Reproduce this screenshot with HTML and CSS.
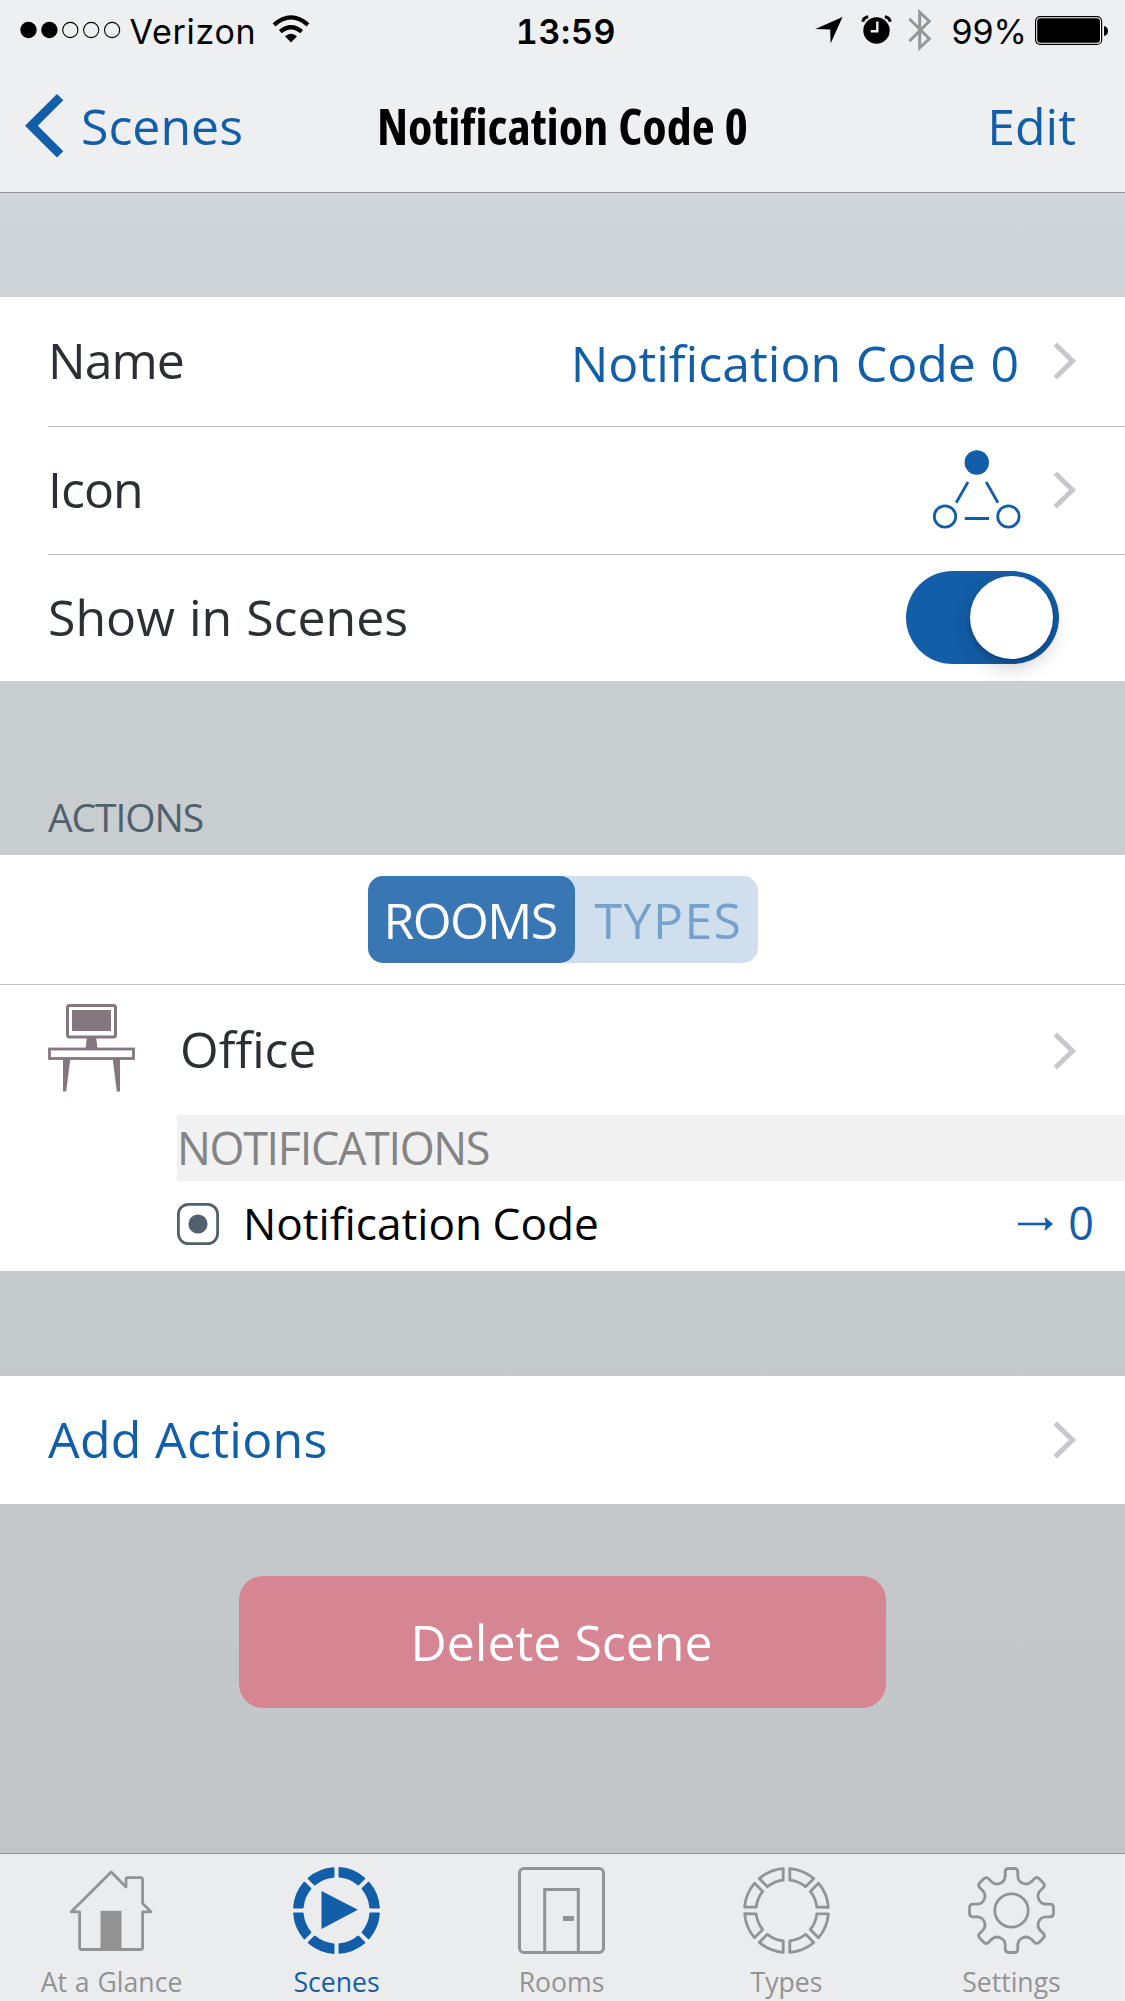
FILE: index.html
```html
<!DOCTYPE html>
<html lang="en">
<head>
<meta charset="utf-8">
<title>Notification Code 0</title>
<link rel="stylesheet" href="styles.css">
</head>
<body>
<svg class="defs" width="0" height="0">
  <defs>
    <path id="seg" d="M3.3-41.9A42 42 0 0 1 27.3-31.9L19.1-23.8A30.5 30.5 0 0 0 3.3-30.3Z"/>
    <path id="seg-solid" d="M3-42.4A42.5 42.5 0 0 1 27.8-32.1L21.8-26.1A34 34 0 0 0 3-33.9Z"/>
    <path id="tooth" d="M-6.3-34.5V-38.5Q-6.3-42-2.8-42H2.8Q6.3-42 6.3-38.5V-34.5A8 8 0 0 0 19.9-28.9"/>
    <symbol id="chevron" viewBox="0 0 24 38"><path d="M2.3 2.3L19.5 19L2.3 35.7" fill="none" stroke="#c7c7cc" stroke-width="5"/></symbol>
  </defs>
</svg>
<div class="screen">
  <header class="top">
    <div class="status">
      <div class="status-left">
        <svg width="101" height="18" viewBox="0 0 101 18"><circle cx="8.5" cy="9" r="8.2"/><circle cx="29.4" cy="9" r="8.2"/><g fill="none" stroke="#000" stroke-width="1.1"><circle cx="50.3" cy="9" r="7.6"/><circle cx="71.2" cy="9" r="7.6"/><circle cx="92.1" cy="9" r="7.6"/></g></svg>
        <span class="carrier">Verizon</span>
        <svg class="wifi" width="38" height="28" viewBox="0 0 38 28"><path d="M19 27.5L13 21.3Q19 16.3 25 21.3Z"/><path d="M8.3 16.7Q19 7.8 29.7 16.7M2 9.8Q19-5 36 9.8" fill="none" stroke="#000" stroke-width="4.2"/></svg>
      </div>
      <div class="clock">13:59</div>
      <div class="status-right">
        <svg class="loc" width="28" height="27" viewBox="0 0 28 27"><path d="M27.5 0L15.6 26.5L15.2 12.6L.4 12Z"/></svg>
        <svg class="alarm" width="29" height="28" viewBox="0 0 29 28"><circle cx="14.5" cy="14.5" r="13.2"/><path d="M.8 5.8Q1.5 1.5 6.2.8M28.2 5.8Q27.5 1.5 22.8.8" fill="none" stroke="#000" stroke-width="3"/><path d="M15.3 5.5V15.3H8.7" fill="none" stroke="#eeeff1" stroke-width="2.4"/></svg>
        <svg class="bt" width="24" height="42" viewBox="0 0 24 42"><path d="M1.3 9.8L21.3 29.8L11.7 38.8V3.2L21.3 12.2L1.3 32.2" fill="none" stroke="#959698" stroke-width="3"/></svg>
        <span class="percent">99%</span>
        <svg class="battery" width="74" height="29" viewBox="0 0 74 29"><rect x=".6" y=".6" width="66" height="27.8" rx="4.5" fill="#fff" stroke="#000" stroke-width="1.2"/><rect x="2.2" y="2.2" width="62.8" height="24.6" rx="3"/><path d="M69 10Q73 11 73 15T69 20Z"/></svg>
      </div>
    </div>
    <nav class="nav">
      <a class="back"><svg width="39" height="64" viewBox="0 0 39 64"><path d="M0 31.7L32 0L38.3 6.2L12.8 31.7L38.3 57.2L32 63.4Z" fill="#135ea8"/></svg><span>Scenes</span></a>
      <h1>Notification Code 0</h1>
      <a class="edit">Edit</a>
    </nav>
  </header>

  <main>
    <section class="card details">
      <div class="row name-row"><span>Name</span><span class="value">Notification Code 0</span><svg class="chev"><use href="#chevron"/></svg></div>
      <div class="row icon-row"><span>Icon</span>
        <svg class="scene-icon" width="88" height="80" viewBox="0 0 88 80"><circle cx="43.8" cy="12.5" r="12.2" fill="#135ea8"/><g fill="none" stroke="#135ea8" stroke-width="2.8"><circle cx="12" cy="66.5" r="10.7"/><circle cx="75.4" cy="66.5" r="10.7"/><path d="M31.8 68.5H56M35 32L23.2 52.8M53.2 32L65 52.8"/></g></svg>
        <svg class="chev"><use href="#chevron"/></svg></div>
      <div class="row show-row"><span class="show">Show in Scenes</span><span class="toggle"><i></i></span></div>
    </section>

    <h2>ACTIONS</h2>

    <section class="card">
      <div class="seg-row"><div class="segmented"><span class="on">ROOMS</span><span class="off">TYPES</span></div></div>
      <div class="office">
        <svg width="87" height="88" viewBox="0 0 87 88" fill="#85777f"><path d="M39 32H48L49.5 45H37.5ZM15 55H22.3L18.2 87.5H15ZM64.7 55H72V87.5H68.8Z"/><rect x="19.5" y="1.5" width="48" height="31.5" rx="2" fill="#fff" stroke="#85777f" stroke-width="3"/><rect x="24" y="6" width="39" height="21"/><rect x="1.5" y="45" width="84" height="9.5" fill="#fff" stroke="#85777f" stroke-width="2.8"/></svg>
        <span class="room">Office</span>
        <svg class="chev"><use href="#chevron"/></svg>
      </div>
      <div class="group">NOTIFICATIONS</div>
      <div class="action">
        <svg width="42" height="42" viewBox="0 0 42 42"><rect x="1.4" y="1.4" width="39.2" height="39.2" rx="10" fill="none" stroke="#50606d" stroke-width="2.8"/><circle cx="21" cy="21" r="9.6" fill="#50606d"/></svg>
        <span class="action-name">Notification Code</span>
        <svg class="arrow" width="35" height="16" viewBox="0 0 35 16"><path d="M0 8H30" stroke="#135ea8" stroke-width="2.6"/><path d="M26.5.8L35 8L26.5 15.2L27.8 8Z" fill="#135ea8"/></svg>
        <span class="action-value">0</span>
      </div>
    </section>

    <section class="card add">
      <div class="row"><span class="add-label">Add Actions</span><svg class="chev"><use href="#chevron"/></svg></div>
    </section>

    <button class="delete">Delete Scene</button>
  </main>

  <footer class="tabs">
    <a class="tab"><svg viewBox="0 0 87 87"><path d="M43.2 5L58 20V12.5Q58 10.6 60 10.6H72.5Q74.6 10.6 74.6 12.7V36.5L83 44.8H74.6V80.5Q74.6 82.5 72.6 82.5H13.6Q11.6 82.5 11.6 80.5V44.8H3.2Z" fill="none" stroke="#939393" stroke-width="2.8" stroke-linejoin="round"/><path d="M32.5 43.8H53.5V82H32.5Z" fill="#939393"/></svg><span class="glance">At a Glance</span></a>
    <a class="tab active"><svg viewBox="-43.5 -43.5 87 87"><g fill="#135ea8" stroke="#135ea8" stroke-width="2" stroke-linejoin="round"><use href="#seg-solid"/><use href="#seg-solid" transform="rotate(45)"/><use href="#seg-solid" transform="rotate(90)"/><use href="#seg-solid" transform="rotate(135)"/><use href="#seg-solid" transform="rotate(180)"/><use href="#seg-solid" transform="rotate(225)"/><use href="#seg-solid" transform="rotate(270)"/><use href="#seg-solid" transform="rotate(315)"/></g><path d="M-15-19.6L21.3-.8L-15 18.4Z" fill="#135ea8"/></svg><span>Scenes</span></a>
    <a class="tab"><svg viewBox="0 0 87 87" fill="none" stroke="#939393" stroke-width="3"><rect x="1.5" y="1.5" width="84" height="84" rx="4.5"/><path d="M26.7 85V22.6H60.3V85"/><path d="M45 51.5H56" stroke-width="5"/></svg><span>Rooms</span></a>
    <a class="tab"><svg viewBox="-43.5 -43.5 87 87" fill="none" stroke="#939393" stroke-width="2.8" stroke-linejoin="round"><use href="#seg"/><use href="#seg" transform="rotate(45)"/><use href="#seg" transform="rotate(90)"/><use href="#seg" transform="rotate(135)"/><use href="#seg" transform="rotate(180)"/><use href="#seg" transform="rotate(225)"/><use href="#seg" transform="rotate(270)"/><use href="#seg" transform="rotate(315)"/></svg><span>Types</span></a>
    <a class="tab"><svg viewBox="-43.5 -43.5 87 87" fill="none" stroke="#939393" stroke-width="2.8" stroke-linecap="round"><use href="#tooth"/><use href="#tooth" transform="rotate(45)"/><use href="#tooth" transform="rotate(90)"/><use href="#tooth" transform="rotate(135)"/><use href="#tooth" transform="rotate(180)"/><use href="#tooth" transform="rotate(225)"/><use href="#tooth" transform="rotate(270)"/><use href="#tooth" transform="rotate(315)"/><circle r="16.7"/></svg><span>Settings</span></a>
  </footer>
</div>
</body>
</html>
```
FILE: styles.css
```css
* { box-sizing: border-box; }
body { margin: 0; font: 400 50px/68px "Open Sans", "Noto Sans", sans-serif; color: #2c3034; }
svg { display: block; flex: none; overflow: visible; }
.defs { display: none; }
.screen { width: 1125px; height: 2001px; overflow: hidden; display: flex; flex-direction: column; background: linear-gradient(#d0d5d9 190px, #c9ced1 700px, #c5cacc 1300px, #c2c6c8 1850px); }
main { flex: 1; display: flex; flex-direction: column; }

.top { height: 193px; background: #eeeff1; border-bottom: 1px solid #8e9397; color: #000; }
.status { height: 60px; display: grid; grid-template-columns: 1fr 120px 1fr; align-items: center; font: 400 34px/40px Inter, sans-serif; }
.status-left, .status-right { display: flex; align-items: center; }
.status-left { padding-left: 19.5px; }
.carrier { margin-left: 9px; letter-spacing: .7px; padding-top: 3px; }
.wifi { margin-left: 16px; margin-bottom: 2px; }
.clock { font-weight: 600; text-align: center; letter-spacing: .7px; font-variant-numeric: tabular-nums; padding: 3px 0 0 7px; }
.status-right { justify-content: flex-end; padding-right: 16px; }
.loc { margin-right: 19px; }
.alarm { margin-right: 17px; }
.bt { margin-right: 19px; }
.percent { margin-right: 8px; padding-top: 3px; }
.nav { height: 132px; display: grid; grid-template-columns: 1fr 400px 1fr; align-items: center; padding: 0 49px 0 25px; }
.back { display: flex; align-items: center; gap: 17px; color: #135ea8; }
.nav h1 { margin: 0 -12px 0 0; padding-left: 12px; font-size: 50px; font-stretch: 75%; font-weight: 700; line-height: 68px; text-align: center; word-spacing: 1px; }
.edit { text-align: right; color: #135ea8; }

.card { background: #fff; }
.details { margin-top: 104px; }
.row { height: 128px; margin-left: 48px; padding-right: 48px; display: flex; align-items: center; border-bottom: 1px solid #bcbdc0; }
.name-row { height: 130px; padding-bottom: 1px; }
.icon-row { padding-bottom: 2px; }
.row.show-row { height: 126px; padding-bottom: 1px; }
.row:last-child { border-bottom: 0; }
.row > span:first-child { margin-right: auto; line-height: 66px; margin-bottom: 2px; letter-spacing: -1px; }
.row > span.show { letter-spacing: 0; word-spacing: 1px; margin-bottom: 2px; }
.chev { width: 24px; height: 38px; margin-left: 34px; }
.value { color: #135ea8; word-spacing: 1.5px; padding-top: 4px; }
.scene-icon { margin: 1px -2px 0 0; }
.toggle { width: 153px; height: 93px; border-radius: 47px; background: #135ea8; margin-right: 18px; padding: 5px 6px; display: flex; justify-content: flex-end; }
.toggle i { width: 83px; height: 83px; border-radius: 50%; background: #fff; box-shadow: 0 8px 20px rgba(0,0,0,.2), 0 3px 4px rgba(0,0,0,.12); }

h2 { margin: 0; height: 174px; padding: 109px 0 0 48px; font-size: 39px; font-weight: 400; line-height: 54px; letter-spacing: -1.1px; color: #50606d; }
.seg-row { height: 130px; display: flex; justify-content: center; align-items: center; border-bottom: 1px solid #bcbdc0; }
.segmented { display: flex; height: 87px; border-radius: 15px; background: #d0dfed; line-height: 89px; text-align: center; }
.on { width: 207px; border-radius: 15px; background: #3977b4; color: #fff; letter-spacing: -1.6px; padding-right: 2px; }
.off { width: 183px; color: #76a1ca; letter-spacing: 1.4px; padding-left: 5px; }
.office { height: 130px; display: flex; align-items: center; padding: 0 48px; }
.office > svg:first-child { margin-bottom: 5px; }
.office .chev { margin-top: 1px; }
.room { margin: 0 auto 2px 45px; font-size: 49.7px; }
.group { height: 66px; margin-left: 177px; background: #f1f1f1; color: #848484; font-size: 45px; line-height: 66px; letter-spacing: -1.35px; }
.action { height: 90px; display: flex; align-items: center; padding: 0 31px 4px 177px; font-size: 45px; color: #000; }
.action-name { margin: 0 auto 0 24px; font-size: 44.2px; word-spacing: -1px; }
.action-name, .action-value { line-height: 60px; padding-bottom: 2px; }
.action-value { margin-left: 15px; color: #135ea8; }
.add { margin-top: 105px; color: #135ea8; }
.row > span.add-label { letter-spacing: .3px; margin-bottom: 2px; }
.delete { align-self: center; margin-top: 72px; width: 647px; height: 132px; padding: 0 2px 0 0; border: 0; border-radius: 24px; background: #d68592; color: #fff; font: inherit; }

.tabs { height: 148px; display: grid; grid-template-columns: repeat(5, 1fr); background: #ebecee; border-top: 1px solid #8e9397; color: #939393; font-size: 26.6px; line-height: 36px; }
.tab { display: flex; flex-direction: column; align-items: center; padding: 13px 2px 0 0; gap: 10px; }
.tab svg { width: 87px; height: 87px; }
.tab.active { color: #135ea8; }
.glance { word-spacing: 1px; }
```
